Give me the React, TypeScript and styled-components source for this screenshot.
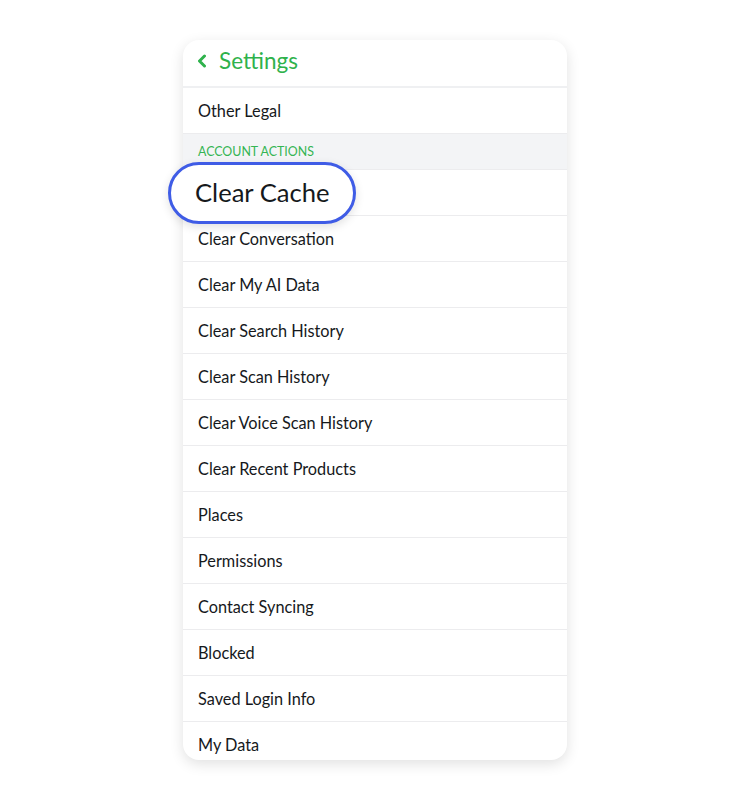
import React from "react";
import styled, { createGlobalStyle } from "styled-components";

const Global = createGlobalStyle`
  html, body { margin: 0; padding: 0; background: #ffffff; }
  body { font-family: "Lato", "Noto Sans", sans-serif; -webkit-font-smoothing: antialiased; }
`;

const Page = styled.div`
  width: 750px;
  height: 800px;
  display: flex;
  justify-content: center;
  padding-top: 40px;
  box-sizing: border-box;
`;

const Card = styled.div`
  position: relative;
  width: 384px;
  height: 720px;
  background: #ffffff;
  border-radius: 16px;
  box-shadow: 0 4px 14px rgba(0, 0, 0, 0.12);
  display: flex;
  flex-direction: column;
`;

const Clip = styled.div`
  border-radius: 16px;
  overflow: hidden;
  height: 100%;
  display: flex;
  flex-direction: column;
`;

const Header = styled.div`
  height: 48px;
  flex: 0 0 48px;
  box-sizing: border-box;
  display: flex;
  align-items: center;
  gap: 11px;
  padding: 0 0 5px 13px;
  color: #2fb24c;
  font-size: 22.5px;
  border-bottom: 2px solid #eff0f2;
`;

const Row = styled.div`
  height: 46px;
  flex: 0 0 46px;
  box-sizing: border-box;
  display: flex;
  align-items: center;
  padding: 0 0 1px 15px;
  font-size: 16.3px;
  color: #16191c;
  border-bottom: 1px solid #ececee;
`;

const SectionHeader = styled.div`
  height: 36px;
  flex: 0 0 36px;
  box-sizing: border-box;
  display: flex;
  align-items: flex-end;
  padding: 0 0 10px 15px;
  font-size: 12.4px;
  color: #35b553;
  background: #f3f4f6;
  border-bottom: 1px solid #ececee;
`;

const Highlight = styled.div`
  position: absolute;
  left: -15px;
  top: 122px;
  width: 188px;
  height: 62px;
  box-sizing: border-box;
  border: 3px solid #3f5ce6;
  border-radius: 31px;
  background: #ffffff;
  box-shadow: 0 3px 10px rgba(0, 0, 0, 0.12);
  display: flex;
  align-items: center;
  padding: 0 0 2px 24px;
  font-size: 25.6px;
  color: #16191c;
`;

const items = [
  "Clear Cache",
  "Clear Conversation",
  "Clear My AI Data",
  "Clear Search History",
  "Clear Scan History",
  "Clear Voice Scan History",
  "Clear Recent Products",
  "Places",
  "Permissions",
  "Contact Syncing",
  "Blocked",
  "Saved Login Info",
  "My Data",
];

export default function App() {
  return (
    <>
      <Global />
      <Page>
        <Card>
          <Clip>
            <Header>
              <svg width="12" height="14" viewBox="0 0 12 14">
                <path d="M8.5 2 L3.5 7 L8.5 12" fill="none" stroke="#2fb24c" strokeWidth="3" strokeLinecap="round" strokeLinejoin="round" />
              </svg>
              <span>Settings</span>
            </Header>
            <Row>Other Legal</Row>
            <SectionHeader>ACCOUNT ACTIONS</SectionHeader>
            {items.map((t, i) => (
              <Row key={t} aria-hidden={i === 0}>
                {i === 0 ? "" : t}
              </Row>
            ))}
          </Clip>
          <Highlight>Clear Cache</Highlight>
        </Card>
      </Page>
    </>
  );
}
